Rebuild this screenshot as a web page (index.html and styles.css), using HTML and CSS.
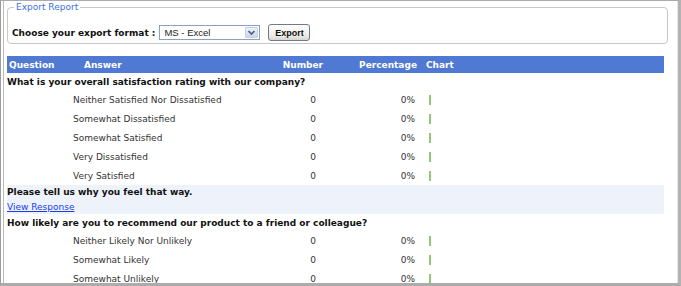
FILE: index.html
```html
<!DOCTYPE html>
<html lang="en">
<head>
    <meta charset="UTF-8">
    <title>Survey Report</title>
    <link rel="stylesheet" href="styles.css">
</head>
<body>
<div class="frame">
    <div class="inner">
        <fieldset class="export">
            <legend>Export Report</legend>
            <div class="export-row">
                <span class="export-label">Choose your export format :</span>
                <span class="select">
                    <span class="select-value">MS - Excel</span>
                    <span class="select-arrow">
                        <svg width="9" height="7" viewBox="0 0 9 7"><path d="M1.5 2 L4.5 5 L7.5 2" fill="none" stroke="#4d5f80" stroke-width="1.7"/></svg>
                    </span>
                </span>
                <button class="btn">Export</button>
            </div>
        </fieldset>

        <table class="report">
            <colgroup>
                <col class="w-q"><col class="w-a"><col class="w-n"><col class="w-p"><col>
            </colgroup>
            <thead>
                <tr>
                    <th class="h-q">Question</th>
                    <th class="h-a">Answer</th>
                    <th class="h-n">Number</th>
                    <th class="h-p">Percentage</th>
                    <th class="h-c">Chart</th>
                </tr>
            </thead>
            <tbody>
                <tr class="question"><td colspan="5">What is your overall satisfaction rating with our company?</td></tr>
                <tr class="answer"><td></td><td>Neither Satisfied Nor Dissatisfied</td><td class="num">0</td><td class="pct">0%</td><td class="chart"><span class="bar"></span></td></tr>
                <tr class="answer"><td></td><td>Somewhat Dissatisfied</td><td class="num">0</td><td class="pct">0%</td><td class="chart"><span class="bar"></span></td></tr>
                <tr class="answer"><td></td><td>Somewhat Satisfied</td><td class="num">0</td><td class="pct">0%</td><td class="chart"><span class="bar"></span></td></tr>
                <tr class="answer"><td></td><td>Very Dissatisfied</td><td class="num">0</td><td class="pct">0%</td><td class="chart"><span class="bar"></span></td></tr>
                <tr class="answer"><td></td><td>Very Satisfied</td><td class="num">0</td><td class="pct">0%</td><td class="chart"><span class="bar"></span></td></tr>

                <tr class="question open-q"><td colspan="5">Please tell us why you feel that way.</td></tr>
                <tr class="open-link"><td colspan="5"><a href="#">View Response</a></td></tr>

                <tr class="question"><td colspan="5">How likely are you to recommend our product to a friend or colleague?</td></tr>
                <tr class="answer"><td></td><td>Neither Likely Nor Unlikely</td><td class="num">0</td><td class="pct">0%</td><td class="chart"><span class="bar"></span></td></tr>
                <tr class="answer"><td></td><td>Somewhat Likely</td><td class="num">0</td><td class="pct">0%</td><td class="chart"><span class="bar"></span></td></tr>
                <tr class="answer"><td></td><td>Somewhat Unlikely</td><td class="num">0</td><td class="pct">0%</td><td class="chart"><span class="bar"></span></td></tr>
            </tbody>
        </table>
    </div>
</div>
</body>
</html>
```

FILE: styles.css
```css
* {
    box-sizing: border-box;
}

body {
    margin: 0;
    overflow: hidden;
    background-color: #fff;
    font-family: "DejaVu Sans", Verdana, sans-serif;
    font-size: 9px;
    color: #333;
}

.frame {
    width: 681px;
    height: 286px;
    border-left: 1px solid #9c9c9c;
    border-top: 1px solid #ababab;
    border-right: 3px solid #b3b3b3;
    border-bottom: 3px solid #acacac;
    padding-left: 2px;
    overflow: hidden;
}

.inner {
    height: 100%;
    border-left: 1px solid #b9b9b9;
    border-right: 1px solid #e6e6e6;
    padding: 0 9px 0 3px;
}

/* export box */
.export {
    margin: 0;
    padding: 0 4px 2px 4px;
    border: 1px solid #c8c8c8;
    border-radius: 4px;
}

.export legend {
    margin-left: 2px;
    padding: 0 2px;
    line-height: 13px;
    color: #3c6fe6;
}

.export-row {
    display: flex;
    align-items: center;
    margin-top: 10px;
    height: 17px;
}

.export-label {
    font-weight: bold;
    color: #111;
}

.select {
    display: flex;
    align-items: center;
    width: 101px;
    height: 15px;
    margin-left: 4px;
    border: 1px solid #8aa2c0;
    background-color: #fff;
}

.select-value {
    flex: 1;
    padding-left: 4px;
    font-family: "Liberation Sans", Arial, sans-serif;
    font-size: 9.5px;
    color: #222;
}

.select-arrow {
    display: flex;
    align-items: center;
    justify-content: center;
    width: 13px;
    height: 11px;
    margin-right: 1px;
    border: 1px solid #c3cfe4;
    border-radius: 1px;
    background: linear-gradient(#eef2fa, #cbd6ec);
}

.btn {
    width: 42px;
    height: 17px;
    margin-left: 8px;
    padding: 0;
    border: 1px solid #6f7a8c;
    border-radius: 3px;
    background: linear-gradient(#ffffff, #ecebe6 70%, #d8d6cd);
    font-family: "Liberation Sans", Arial, sans-serif;
    font-weight: bold;
    font-size: 9px;
    color: #111;
}

/* report table */
.report {
    width: 657px;
    margin-top: 12px;
    border-collapse: collapse;
    table-layout: fixed;
}

.w-q { width: 66px; }
.w-a { width: 202px; }
.w-n { width: 50px; }
.w-p { width: 96px; }

.report th,
.report td {
    padding: 0;
    white-space: nowrap;
}

.report th {
    height: 17px;
    background-color: #5079d3;
    color: #fff;
    font-weight: bold;
    text-align: left;
}

.report .h-q { padding-left: 2px; }
.report .h-a { padding-left: 11px; }
.report .h-n { text-align: right; padding-right: 2px; }
.report .h-p { text-align: right; padding-right: 4px; }
.report .h-c { padding-left: 5px; }

.question td {
    height: 17px;
    font-weight: bold;
    color: #111;
}

.answer td {
    height: 19px;
}

.answer .num {
    text-align: right;
    padding-right: 9px;
}

.answer .pct {
    text-align: right;
    padding-right: 6px;
}

.answer .chart {
    padding-left: 8px;
}

.bar {
    display: block;
    width: 2px;
    height: 10px;
    background-color: #93c773;
}

.open-q td {
    height: 14px;
    background-color: #eef2fb;
}

.open-link td {
    height: 15px;
    vertical-align: bottom;
    background-color: #eef2fb;
}

.open-link a {
    color: #1a3cf0;
    line-height: 13px;
}
```
